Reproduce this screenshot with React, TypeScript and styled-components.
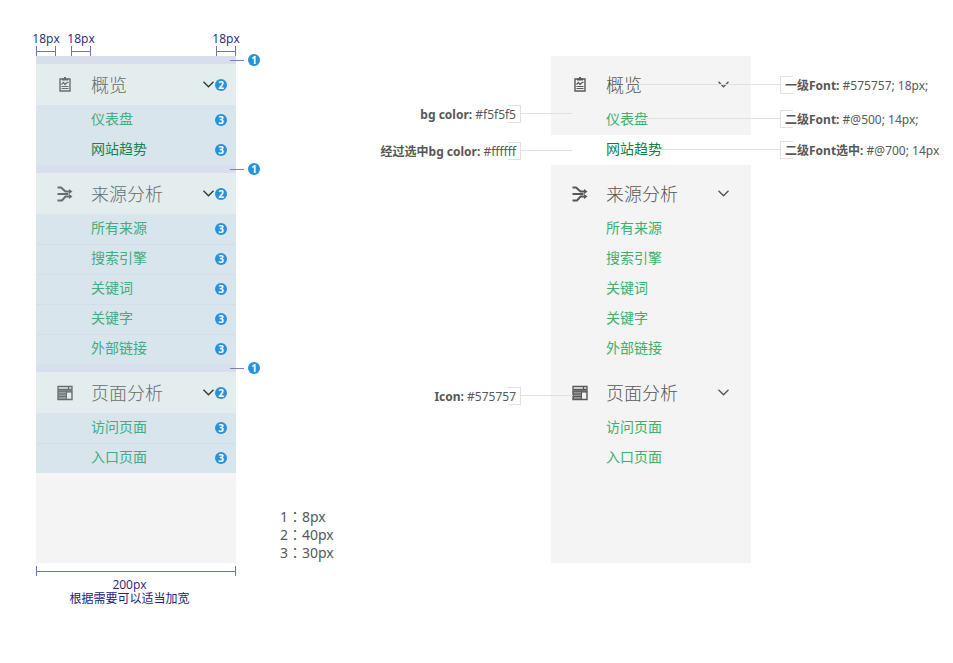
import React from "react";
import styled, { createGlobalStyle, css } from "styled-components";

const GlobalStyle = createGlobalStyle`
  * { box-sizing: border-box; }
  body {
    margin: 0;
    background: #ffffff;
    color: #575757;
    font-family: "Noto Sans", "Noto Sans CJK SC", sans-serif;
  }
`;

const navy = "#1a237e";

const Board = styled.main`
  display: grid;
  grid-template-columns: 200px minmax(0, 1fr) 200px 202px;
  padding: 31px 0 48px 36px;
`;

const DimensionRow = styled.div`
  grid-column: 1 / -1;
  display: flex;
  gap: 15px;
  width: 200px;
`;

const Dimension = styled.div<{ $end?: boolean }>`
  display: flex;
  flex-direction: column;
  align-items: center;
  width: 20px;
  margin-left: ${(p) => (p.$end ? "auto" : "0")};
`;

const DimensionLabel = styled.span`
  color: ${navy};
  font-family: "Open Sans", sans-serif;
  font-size: 12px;
  line-height: 15px;
  white-space: nowrap;
`;

const Bracket = styled.div`
  display: flex;
  align-items: center;
  align-self: stretch;
  height: 10px;
  border: solid #6c74b4;
  border-width: 0 1px;

  &::before {
    content: "";
    flex: 1;
    height: 1px;
    background: #6c74b4;
  }
`;

const PanelArea = styled.div`
  position: relative;
  grid-column: 3;
`;

const Panel = styled.nav<{ $tinted?: boolean }>`
  padding-bottom: 90px;
  background: #f4f4f4;
  --text: ${(p) => (p.$tinted ? "#666f70" : "#575757")};
  --chevron: ${(p) => (p.$tinted ? "#333a3c" : "#575757")};
  --link: ${(p) => (p.$tinted ? "#45ab80" : "#3cb06e")};
  --link-active: ${(p) => (p.$tinted ? "#17834f" : "#0b8043")};
  --active-bg: ${(p) => (p.$tinted ? "#d8e5ec" : "#ffffff")};
  --band: ${(p) => (p.$tinted ? "#d9deec" : "transparent")};
  --header: ${(p) => (p.$tinted ? "#e3edee" : "transparent")};
  --item: ${(p) => (p.$tinted ? "#d8e5ec" : "transparent")};
  --rule: ${(p) => (p.$tinted ? "#d0e0e8" : "transparent")};
`;

const Band = styled.div`
  position: relative;
  height: 8px;
  background: var(--band);
`;

const Header = styled.button`
  position: relative;
  display: flex;
  align-items: center;
  gap: 18px;
  width: 100%;
  height: 41px;
  padding: 0 22px 0 21px;
  border: 0;
  background: var(--header);
  color: var(--text);
  font-family: inherit;
  font-size: 18px;
  font-weight: 300;
  line-height: 24px;
  text-align: left;
  cursor: pointer;

  svg { flex: none; display: block; }
`;

const HeaderTitle = styled.span`
  flex: 1;
`;

const Items = styled.ul`
  margin: 0;
  padding: 0;
  list-style: none;
`;

const Item = styled.li`
  position: relative;
  background: var(--item);

  & + & { box-shadow: inset 0 1px var(--rule); }
`;

const ItemLink = styled.a<{ $active?: boolean }>`
  display: block;
  padding: 0 0 2px 55px;
  color: var(--link);
  font-size: 14px;
  line-height: 28px;
  text-decoration: none;
  ${(p) =>
    p.$active &&
    css`
      color: var(--link-active);
      background: var(--active-bg);
    `}
`;

const Badge = styled.span`
  display: flex;
  align-items: center;
  justify-content: center;
  width: 12px;
  height: 12px;
  border-radius: 50%;
  background: #2a90d9;
  color: #ffffff;
  font-family: "Open Sans", sans-serif;
  font-size: 10px;
  font-weight: 700;
  line-height: 12px;
`;

const RowBadge = styled(Badge)`
  position: absolute;
  right: 9px;
  top: calc(50% - 6px);
`;

const BandMark = styled.span`
  position: absolute;
  left: calc(100% - 6px);
  top: -2px;
  display: flex;
  align-items: center;
  gap: 4px;

  &::before {
    content: "";
    width: 14px;
    height: 1px;
    background: #7c80ba;
  }
`;

const Legend = styled.div`
  grid-column: 2;
  align-self: end;
  padding: 0 0 1px 44px;
  font-family: "Noto Sans", "Noto Sans CJK TC", sans-serif;
  font-size: 14px;
  line-height: 18px;
`;

const WidthNote = styled.div`
  grid-column: 1;
  padding-top: 3px;
`;

const WidthText = styled.p`
  margin: 2px 13px 0 0;
  color: ${navy};
  font-family: "Open Sans", "Noto Sans CJK SC", sans-serif;
  font-size: 12px;
  line-height: 14px;
  text-align: center;
`;

const Callout = styled.div<{ $side: "left" | "right"; $top: number; $reach: number }>`
  position: absolute;
  top: ${(p) => p.$top}px;
  ${(p) => (p.$side === "left" ? "right: calc(100% + 30px);" : "left: calc(100% + 29px);")}
  height: 18px;
  padding: ${(p) => (p.$side === "left" ? "0 5px 0 0" : "0 0 0 5px")};
  font-size: 12px;
  line-height: 19px;
  white-space: nowrap;

  &::before {
    content: "";
    position: absolute;
    z-index: -1;
    top: 0;
    bottom: 0;
    width: 12px;
    ${(p) => p.$side === "left" ? "right: 0;" : "left: 0;"}
    border: 1px solid #e0e0e0;
    ${(p) => (p.$side === "left" ? "border-left: 0;" : "border-right: 0;")}
  }

  &::after {
    content: "";
    position: absolute;
    top: 8px;
    height: 1px;
    width: ${(p) => p.$reach}px;
    ${(p) => (p.$side === "left" ? "left: 100%;" : "right: 100%;")}
    background: #e0e0e0;
  }
`;

const ClipboardIcon = () => (
  <svg width="16" height="16" viewBox="0 0 16 16" fill="none" stroke="currentColor" aria-hidden="true">
    <path d="M3 2h10v12H3z" strokeWidth="1.4" />
    <path d="M5 2.500h6M7 1h2" strokeWidth="2" />
    <path d="M4.500 7.500l2-2 1.500 2 1.500-1.500 2-1" strokeWidth="1.2" />
    <path d="M4.500 9.500h7M4.500 11.500h7" strokeWidth="1.2" />
  </svg>
);

const FlowIcon = () => (
  <svg width="16" height="16" viewBox="0 0 16 16" fill="none" stroke="currentColor" strokeWidth="2" aria-hidden="true">
    <path d="M.5 1.500H4L8.500 5.500h5M.5 8h11M.5 14.500H5l3.500-4h5" />
    <path d="M12 3l3.500 2.500L12 8zM12 8l3.500 2.500L12 13z" fill="currentColor" stroke="none" />
  </svg>
);

const PageIcon = () => (
  <svg width="16" height="16" viewBox="0 0 16 16" fill="none" stroke="currentColor" aria-hidden="true">
    <path d="M1 1.500h14v3H1zM11.500 1.500v3" strokeWidth="1.3" />
    <path d="M1 6h14v8.500H1z" strokeWidth="1.4" />
    <path d="M1 6h14v2H1zM1 6h8v8.500H1z" fill="currentColor" stroke="none" opacity=".6" />
    <path d="M9.500 6v8.500M2 9h7M2 11.500h7" />
  </svg>
);

const Chevron = () => (
  <svg width="11" height="7" viewBox="0 0 11 7" fill="none" stroke="var(--chevron)" strokeWidth="1.4" aria-hidden="true">
    <path d="M.5.8l5 5 5-5" />
  </svg>
);

const groups = [
  { title: "概览", icon: <ClipboardIcon />, items: ["仪表盘", "网站趋势"] },
  { title: "来源分析", icon: <FlowIcon />, items: ["所有来源", "搜索引擎", "关键词", "关键字", "外部链接"] },
  { title: "页面分析", icon: <PageIcon />, items: ["访问页面", "入口页面"] },
];

function Menu({ annotated, label }: { annotated?: boolean; label: string }) {
  return (
    <Panel $tinted={annotated} aria-label={label}>
      {groups.map((group) => (
        <React.Fragment key={group.title}>
          <Band>{annotated && <BandMark><Badge>1</Badge></BandMark>}</Band>
          <Header type="button" aria-expanded="true">
            {group.icon}
            <HeaderTitle>{group.title}</HeaderTitle>
            <Chevron />
            {annotated && <RowBadge>2</RowBadge>}
          </Header>
          <Items>
            {group.items.map((item) => (
              <Item key={item}>
                <ItemLink href="#" $active={item === "网站趋势"}>{item}</ItemLink>
                {annotated && <RowBadge>3</RowBadge>}
              </Item>
            ))}
          </Items>
        </React.Fragment>
      ))}
    </Panel>
  );
}

export default function App() {
  return (
    <>
      <GlobalStyle />
      <Board>
        <DimensionRow>
          <Dimension><DimensionLabel>18px</DimensionLabel><Bracket /></Dimension>
          <Dimension><DimensionLabel>18px</DimensionLabel><Bracket /></Dimension>
          <Dimension $end><DimensionLabel>18px</DimensionLabel><Bracket /></Dimension>
        </DimensionRow>

        <Menu annotated label="Menu spacing" />
        <Legend>
          <div>1：8px</div>
          <div>2：40px</div>
          <div>3：30px</div>
        </Legend>
        <PanelArea>
          <Menu label="Menu styles" />
          <Callout $side="left" $top={49} $reach={51}><b>bg color:</b> #f5f5f5</Callout>
          <Callout $side="left" $top={86} $reach={51}><b>经过选中bg color:</b> #ffffff</Callout>
          <Callout $side="left" $top={331} $reach={52}><b>Icon:</b> #575757</Callout>
          <Callout $side="right" $top={20} $reach={142}><b>一级Font:</b> #575757; 18px;</Callout>
          <Callout $side="right" $top={54} $reach={142}><b>二级Font:</b> #@500; 14px;</Callout>
          <Callout $side="right" $top={85} $reach={126}><b>二级Font选中:</b> #@700; 14px</Callout>
        </PanelArea>

        <WidthNote>
          <Bracket />
          <WidthText>200px<br />根据需要可以适当加宽</WidthText>
        </WidthNote>
      </Board>
    </>
  );
}
